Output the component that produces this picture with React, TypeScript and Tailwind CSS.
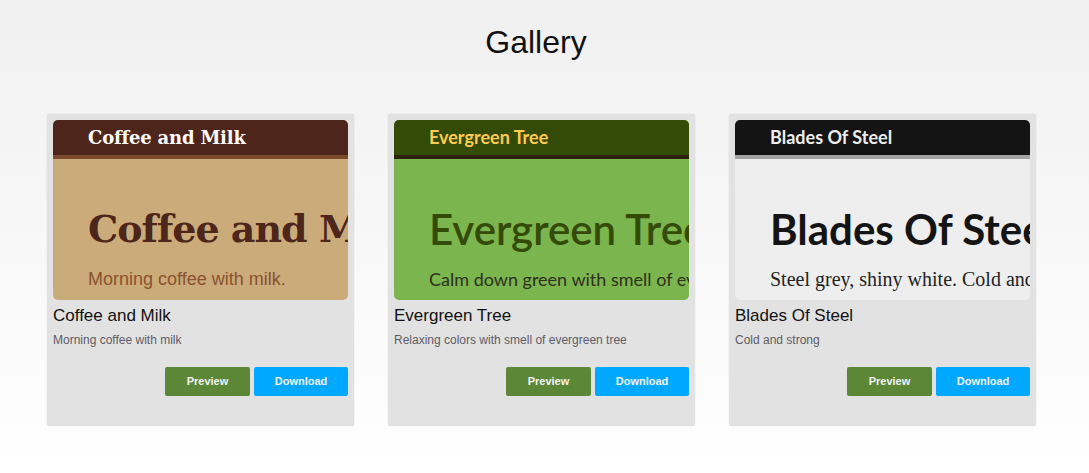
import React from "react";

type Theme = {
  name: string;
  blurb: string;
  tagline: string;
  headerBg: string;
  headerBorder: string;
  headerText: string;
  bodyBg: string;
  bigText: string;
  subText: string;
};

const themes: Theme[] = [
  {
    name: "Coffee and Milk",
    blurb: "Morning coffee with milk",
    tagline: "Morning coffee with milk.",
    headerBg: "bg-[#4e251a]",
    headerBorder: "border-[#7a4a2a]",
    headerText: "text-white text-[18px] font-bold font-['DejaVu_Serif',serif] tracking-[-0.2px]",
    bodyBg: "bg-[#cbab79]",
    bigText: "text-[#4e251a] font-['DejaVu_Serif',serif] font-bold text-[38px] tracking-[-1px]",
    subText: "text-[#8a5230] font-['Liberation_Sans',Arial,sans-serif] text-[18px]",
  },
  {
    name: "Evergreen Tree",
    blurb: "Relaxing colors with smell of evergreen tree",
    tagline: "Calm down green with smell of evergreen tree.",
    headerBg: "bg-[#344a07]",
    headerBorder: "border-[#2a200c]",
    headerText: "text-[#ffcc4f] text-[18px] font-bold font-['Lato',sans-serif]",
    bodyBg: "bg-[#7bb54d]",
    bigText: "text-[#344a07] font-['Lato',sans-serif] font-semibold text-[42px]",
    subText: "text-[#2f2f1f] font-['Lato',sans-serif] text-[18px]",
  },
  {
    name: "Blades Of Steel",
    blurb: "Cold and strong",
    tagline: "Steel grey, shiny white. Cold and strong.",
    headerBg: "bg-[#141414]",
    headerBorder: "border-[#a3a3a3]",
    headerText: "text-[#eeeeee] text-[18px] font-bold font-['Lato',sans-serif]",
    bodyBg: "bg-[#eeeeee]",
    bigText: "text-[#141414] font-['Lato',sans-serif] font-bold text-[42px]",
    subText: "text-[#222222] font-['Liberation_Serif',serif] text-[20px]",
  },
];

function ThemeCard({ theme }: { theme: Theme }) {
  return (
    <article className="w-[307px] h-[312px] rounded-[3px] bg-[#e2e2e2] p-[6px] shadow-[0_0_1px_rgba(0,0,0,0.25)] flex flex-col">
      <div className={`h-[180px] rounded-[5px] overflow-hidden ${theme.bodyBg}`}>
        <div className={`h-[39px] border-b-4 ${theme.headerBg} ${theme.headerBorder} pl-[35px] flex items-center`}>
          <span className={`whitespace-nowrap ${theme.headerText}`}>{theme.name}</span>
        </div>
        <div className="pl-[35px] pt-[42px]">
          <div className={`whitespace-nowrap leading-[56px] ${theme.bigText}`}>{theme.name}</div>
          <div className={`whitespace-nowrap mt-[11px] leading-[22px] ${theme.subText}`}>{theme.tagline}</div>
        </div>
      </div>

      <h3 className="mt-[6px] text-[17px] leading-[20px] text-[#111] font-['Liberation_Sans',Arial,sans-serif]">{theme.name}</h3>
      <p className="mt-[7px] text-[12px] leading-[14px] text-[#5e5c66] font-['Liberation_Sans',Arial,sans-serif]">{theme.blurb}</p>

      <div className="mt-[20px] flex justify-end gap-[4px] font-['Liberation_Sans',Arial,sans-serif]">
        <button className="w-[85px] h-[29px] rounded-[2px] bg-[#5b8736] text-[11px] font-bold text-[#f4f4f4]">Preview</button>
        <button className="w-[94px] h-[29px] rounded-[2px] bg-[#00a8ff] text-[11px] font-bold text-[#f4f4f4]">Download</button>
      </div>
    </article>
  );
}

export default function App() {
  return (
    <div className="min-h-[473px] bg-gradient-to-b from-[#f0f0f0] to-[#ffffff] font-['Liberation_Sans',Arial,sans-serif]">
      <h1 className="pt-[20px] pr-[17px] text-center text-[32px] leading-[44px] text-[#111]">Gallery</h1>
      <div className="mt-[50px] pl-[47px] flex gap-[34px]">
        {themes.map((theme) => (
          <ThemeCard key={theme.name} theme={theme} />
        ))}
      </div>
    </div>
  );
}
